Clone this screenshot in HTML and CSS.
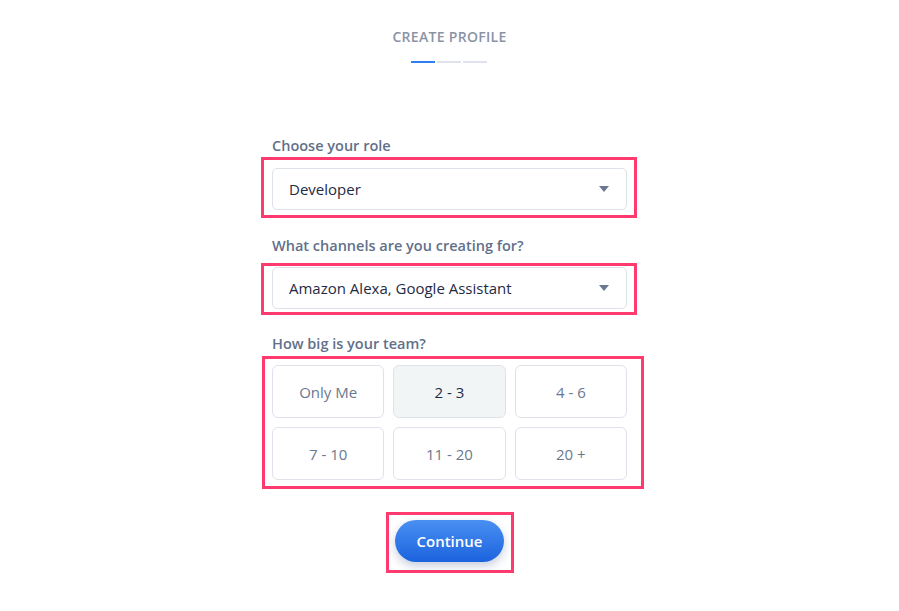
FILE: index.html
```html
<!DOCTYPE html>
<html lang="en">
<head>
<meta charset="utf-8">
<title>Create Profile</title>
<link rel="stylesheet" href="styles.css">
</head>
<body>
<main class="page">
  <header class="head">
    <h1 class="title">CREATE PROFILE</h1>
    <div class="steps">
      <span class="step active"></span>
      <span class="step"></span>
      <span class="step"></span>
    </div>
  </header>

  <form class="form">
    <div class="field">
      <label class="label">Choose your role</label>
      <div class="mark mark-1">
        <div class="select">
          <span>Developer</span>
          <svg class="caret" width="10" height="6" viewBox="0 0 10 6"><path d="M0 0h10L5 6z" fill="#6b7892"/></svg>
        </div>
      </div>
    </div>

    <div class="field">
      <label class="label">What channels are you creating for?</label>
      <div class="mark mark-2">
        <div class="select">
          <span>Amazon Alexa, Google Assistant</span>
          <svg class="caret" width="10" height="6" viewBox="0 0 10 6"><path d="M0 0h10L5 6z" fill="#6b7892"/></svg>
        </div>
      </div>
    </div>

    <div class="field">
      <label class="label">How big is your team?</label>
      <div class="mark mark-3">
        <div class="team">
          <button type="button" class="opt">Only Me</button>
          <button type="button" class="opt selected">2 - 3</button>
          <button type="button" class="opt">4 - 6</button>
          <button type="button" class="opt">7 - 10</button>
          <button type="button" class="opt">11 - 20</button>
          <button type="button" class="opt">20 +</button>
        </div>
      </div>
    </div>

    <div class="actions">
      <div class="mark mark-4">
        <button type="button" class="continue">Continue</button>
      </div>
    </div>
  </form>
</main>
</body>
</html>
```

FILE: styles.css
```css
* { box-sizing: border-box; }
html, body { margin: 0; padding: 0; background: #fff; }
body {
  font-family: "Open Sans", "Noto Sans", sans-serif;
  color: #1f2a44;
}
.page {
  min-height: 611px;
  display: flex;
  flex-direction: column;
  align-items: center;
  padding-top: 27px;
}
.head {
  display: flex;
  flex-direction: column;
  align-items: center;
}
.title {
  margin: 0;
  font-size: 14px;
  font-weight: 600;
  letter-spacing: 0.3px;
  color: #8b93a7;
  line-height: 20px;
}
.steps {
  display: flex;
  gap: 2px;
  margin-top: 14px;
}
.step {
  width: 24px;
  height: 2px;
  background: #dfe2ec;
}
.step.active { background: #2f7ff0; }

.form {
  width: 355px;
  margin-top: 73px;
  display: flex;
  flex-direction: column;
}
.field { display: flex; flex-direction: column; }
.field:nth-child(2) { margin-top: 26px; }
.field:nth-child(3) { margin-top: 25px; }
.label {
  font-size: 14.5px;
  font-weight: 600;
  color: #62708a;
  line-height: 20px;
  margin-bottom: 11px;
}
.field:first-child .label { margin-bottom: 12px; }
.mark {
  position: relative;
  display: flex;
}
.mark > * { flex: 1; }
.mark::after {
  content: "";
  position: absolute;
  border: 3px solid #ff3a6e;
  pointer-events: none;
}
.mark-1::after { left: -11px; right: -10px; top: -11px; bottom: -8px; }
.mark-2::after { left: -11px; right: -10px; top: -4px; bottom: -6px; }
.mark-3::after { left: -10px; right: -17px; top: -9px; bottom: -9px; }
.mark-4::after { left: -9px; right: -10px; top: -8px; bottom: -11px; }

.select {
  height: 42px;
  border: 1px solid #dde1e9;
  border-radius: 5px;
  display: flex;
  align-items: center;
  justify-content: space-between;
  padding: 0 17px 0 16px;
  font-size: 15px;
  color: #1f2a44;
}
.caret { display: block; }

.team {
  display: grid;
  grid-template-columns: repeat(3, 1fr);
  gap: 9px;
}
.opt {
  height: 53px;
  border: 1px solid #dfe2ea;
  border-radius: 6px;
  background: #fff;
  font-family: inherit;
  font-size: 15px;
  color: #6b7890;
  padding: 0;
}
.opt.selected {
  background: #f1f5f6;
  color: #1f2a44;
}

.actions {
  display: flex;
  justify-content: center;
  margin-top: 40px;
}
.continue {
  flex: none;
  width: 109px;
  height: 42px;
  border: none;
  border-radius: 21px;
  background: linear-gradient(180deg, #4a8ff2 0%, #1b63de 100%);
  color: #fff;
  font-family: inherit;
  font-size: 15px;
  font-weight: 600;
  box-shadow: 0 4px 10px rgba(30, 60, 120, 0.25);
  padding: 0;
}
```
